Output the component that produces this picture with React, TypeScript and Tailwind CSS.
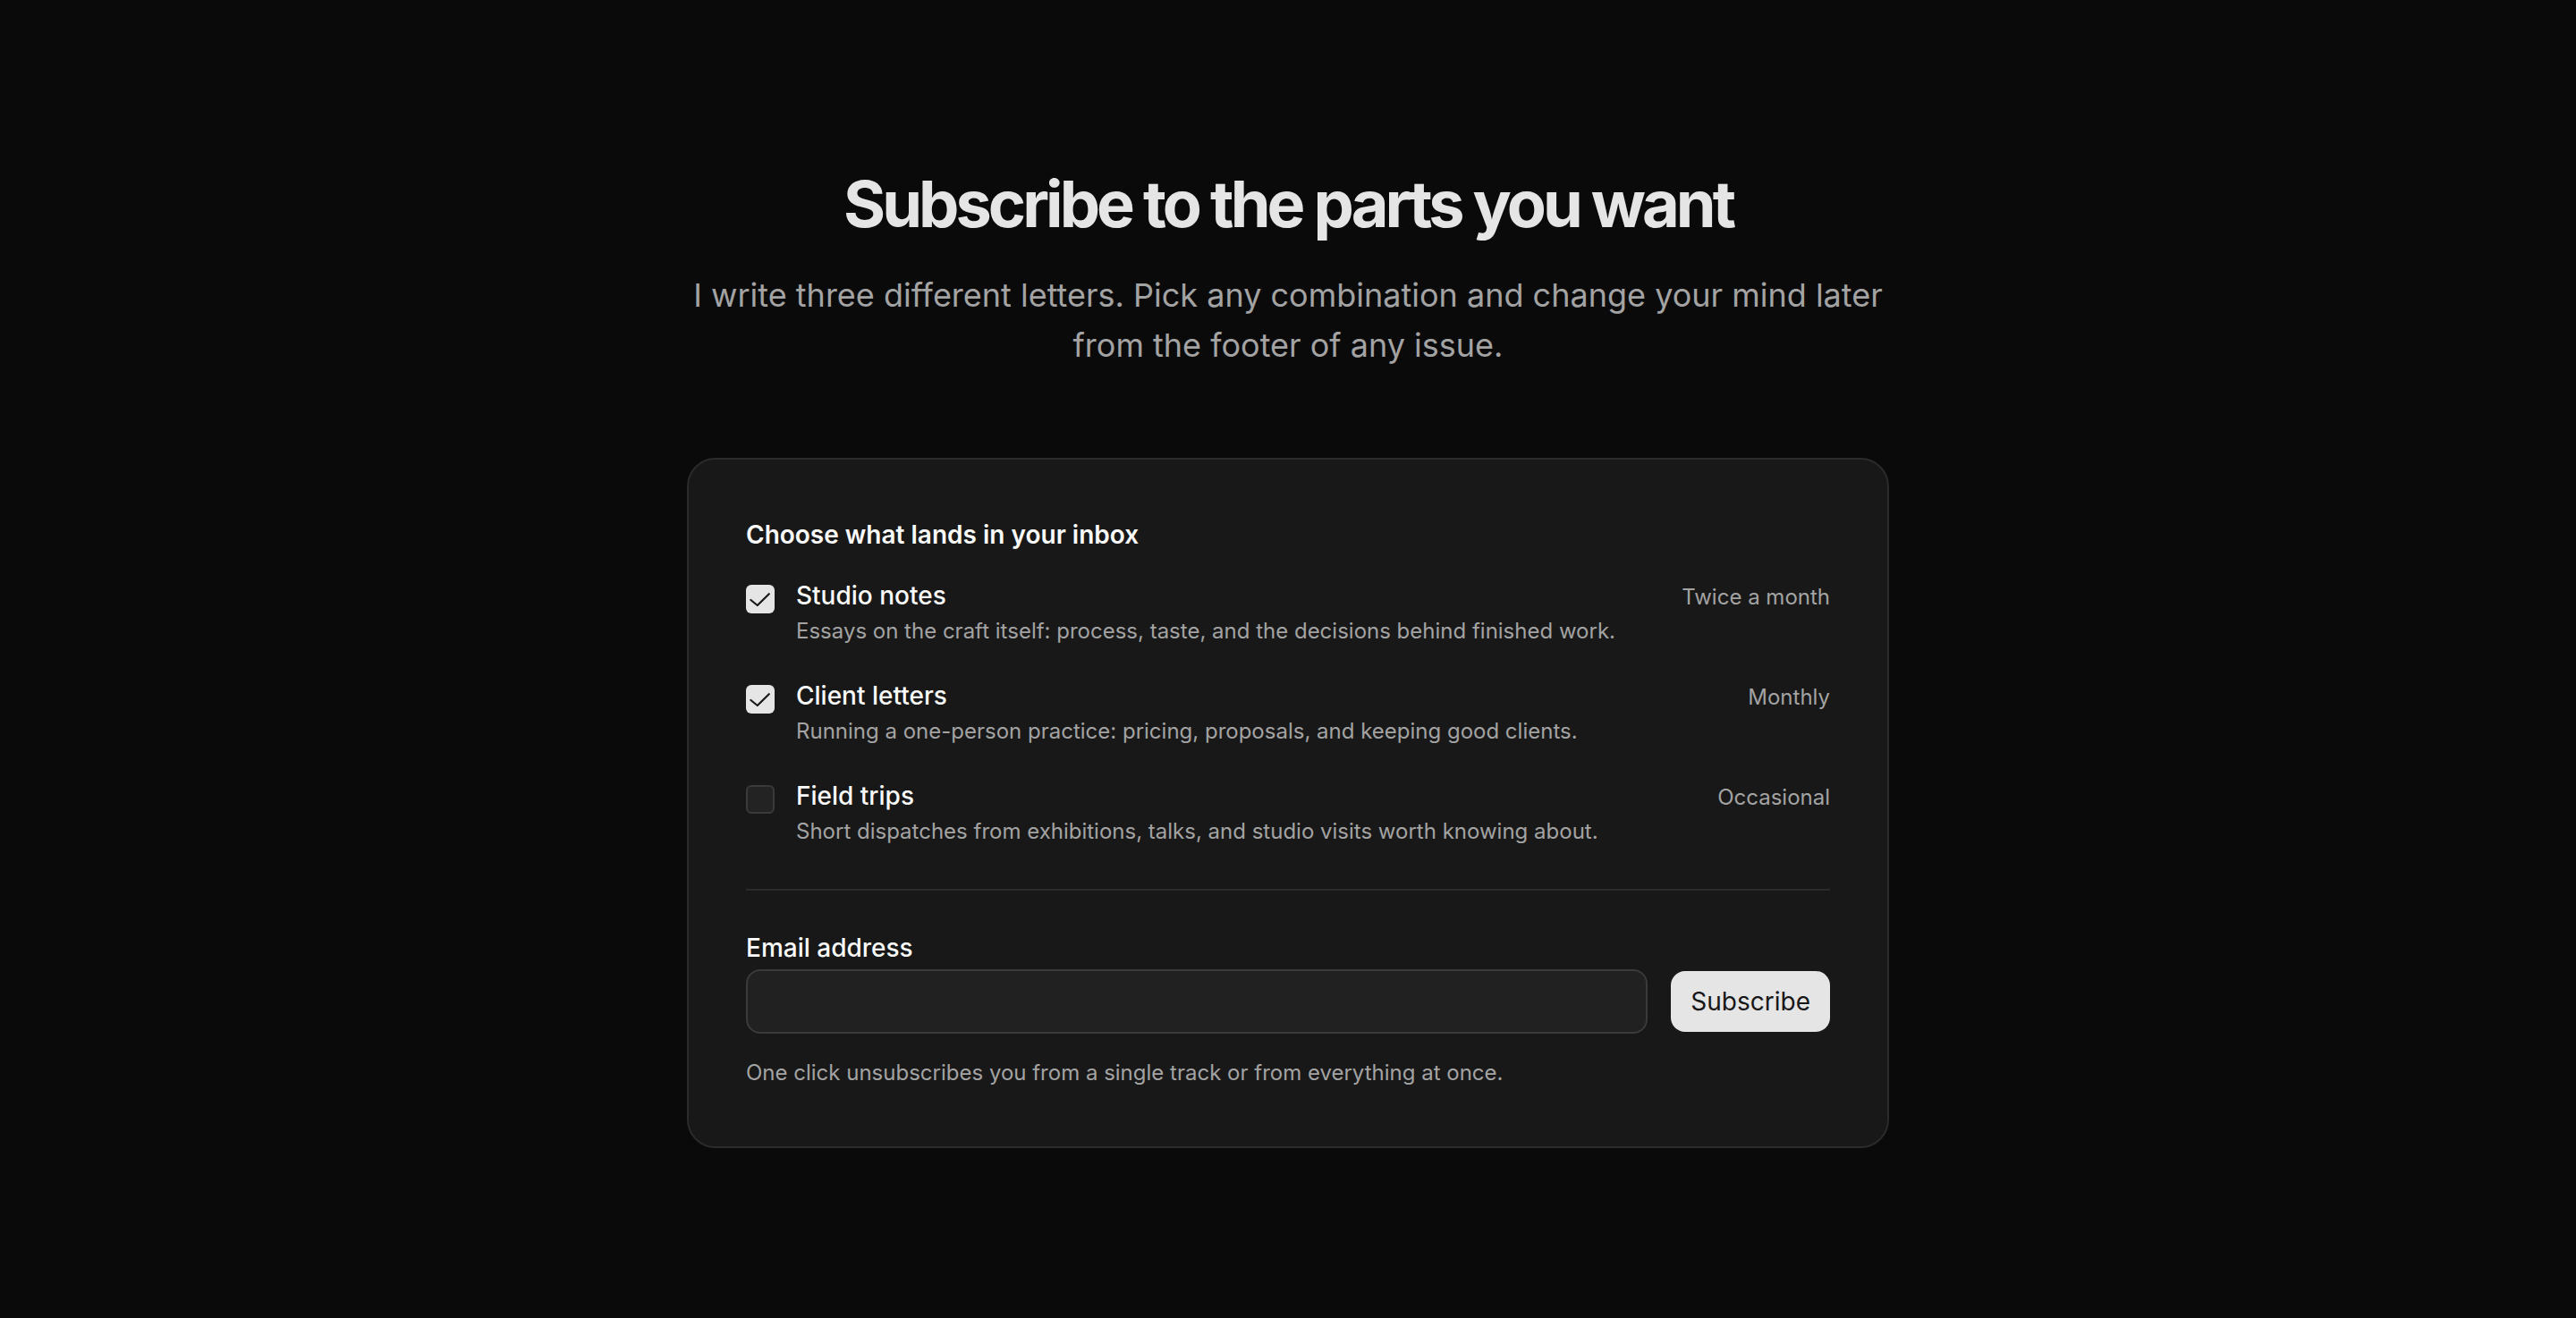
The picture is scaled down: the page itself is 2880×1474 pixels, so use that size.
import { useState } from "react"

const tracks = [
  {
    id: "studio",
    title: "Studio notes",
    description: "Essays on the craft itself: process, taste, and the decisions behind finished work.",
    cadence: "Twice a month",
    checked: true,
  },
  {
    id: "client",
    title: "Client letters",
    description: "Running a one-person practice: pricing, proposals, and keeping good clients.",
    cadence: "Monthly",
    checked: true,
  },
  {
    id: "field",
    title: "Field trips",
    description: "Short dispatches from exhibitions, talks, and studio visits worth knowing about.",
    cadence: "Occasional",
    checked: false,
  },
]

function Checkbox({ checked, onToggle }: { checked: boolean; onToggle: () => void }) {
  return (
    <button
      type="button"
      onClick={onToggle}
      className={`mt-3 flex size-8 shrink-0 items-center justify-center rounded-[6px] ${
        checked ? "bg-[#e5e5e5]" : "border-2 border-[#3a3a3a] bg-[#232323]"
      }`}
    >
      {checked && (
        <svg viewBox="0 0 16 16" className="size-8" fill="none">
          <path d="M2.7 8.5l3.7 3L12.9 5.1" stroke="#171717" strokeWidth="1.1" strokeLinecap="round" strokeLinejoin="round" />
        </svg>
      )}
    </button>
  )
}

export default function App() {
  const [selected, setSelected] = useState<Record<string, boolean>>(
    Object.fromEntries(tracks.map((t) => [t.id, t.checked]))
  )

  return (
    <main className="min-h-screen bg-[#0a0a0a] px-12 pt-[188px] pb-48 font-[Inter,sans-serif]">
      <h1 className="text-center text-7xl leading-[80px] font-bold tracking-[-0.055em] text-[#e5e5e5]">
        Subscribe to the parts you want
      </h1>
      <p className="mx-auto mt-[34px] max-w-[1344px] text-center text-4xl leading-[56px] text-[#a3a3a3]">
        I write three different letters. Pick any combination and change your mind later from the footer of any issue.
      </p>

      <div className="mx-auto mt-[98px] max-w-[1344px] rounded-[32px] border-2 border-[#2b2b2b] bg-[#181818] px-16 pt-16 pb-[62px]">
        <h2 className="text-[28px] leading-10 font-semibold text-[#fafafa]">Choose what lands in your inbox</h2>

        <div className="mt-6 flex flex-col gap-7">
          {tracks.map((t) => (
            <div key={t.id} className="flex items-start gap-6">
              <Checkbox
                checked={selected[t.id]}
                onToggle={() => setSelected((s) => ({ ...s, [t.id]: !s[t.id] }))}
              />
              <div className="min-w-0 flex-1">
                <div className="flex items-baseline justify-between gap-8">
                  <span className="text-[28px] leading-12 font-medium text-[#fafafa]">{t.title}</span>
                  <span className="text-2xl text-[#a3a3a3]">{t.cadence}</span>
                </div>
                <p className="-mt-1 text-2xl leading-10 text-[#a3a3a3]">{t.description}</p>
              </div>
            </div>
          ))}
        </div>

        <div className="mt-11 border-t-2 border-[#2b2b2b] pt-11">
          <label htmlFor="email" className="block text-[28px] leading-10 font-medium text-[#fafafa]">
            Email address
          </label>
          <div className="mt-1 flex items-center gap-[26px]">
            <input
              id="email"
              type="email"
              className="h-[72px] min-w-0 flex-1 rounded-2xl border-2 border-[#3a3a3a] bg-[#212121] px-6 text-[28px] text-[#fafafa] outline-none"
            />
            <button
              type="button"
              className="rounded-2xl bg-[#e5e5e5] px-[22px] py-3.5 text-[28px] leading-10 text-[#171717]"
            >
              Subscribe
            </button>
          </div>
          <p className="mt-6 text-2xl leading-10 text-[#a3a3a3]">
            One click unsubscribes you from a single track or from everything at once.
          </p>
        </div>
      </div>
    </main>
  )
}
